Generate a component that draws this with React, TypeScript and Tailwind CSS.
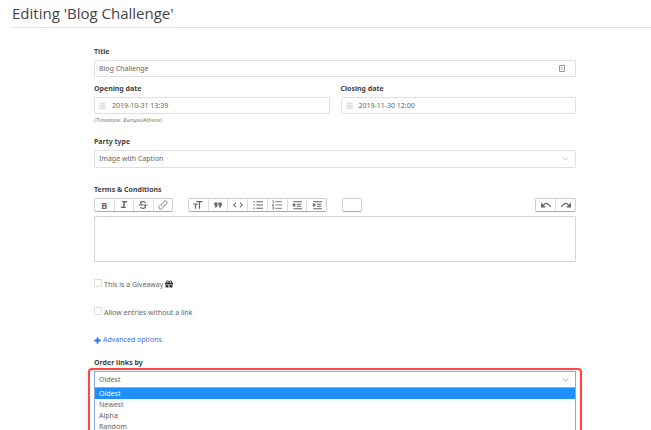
import { useState } from 'react'
import type { ReactNode } from 'react'
import { FaCalendarAlt, FaGift, FaPlus } from 'react-icons/fa'

const orderOptions = ['Oldest', 'Newest', 'Alpha', 'Random']

const icons: Record<string, ReactNode> = {
  Strike: (
    <>
      <path strokeWidth="3" d="M18 7C17 3 6 3 6 8c0 2 2 3 4 4M6 17c1 4 12 4 12-1 0-2-1-3-3-4" />
      <path strokeWidth="2" d="M1 12h22" />
    </>
  ),
  Link: (
    <>
      <path d="M10 14c-2-2-2-4 0-6l5-5c4-3 9 2 6 6l-4 4" />
      <path d="M14 10c2 2 2 4 0 6l-5 5c-4 3-9-2-6-6l4-4" />
    </>
  ),
  Heading: <path strokeWidth="3" d="M8 4h15M15.500 4v17M1 10h10M6 10v11" />,
  Quote: (
    <path
      fill="currentColor"
      stroke="none"
      d="M3 6h8v7l-3 5H4l2-5H3zM13 6h8v7l-3 5h-4l2-5h-3z"
    />
  ),
  Code: <path strokeWidth="2.500" d="M7 7l-5 5 5 5M17 7l5 5-5 5" />,
  Bullets: <path strokeWidth="2.500" d="M1 4h4M1 12h4M1 20h4M8 4h16M8 12h16M8 20h16" />,
  Numbers: <path strokeWidth="2" d="M1 2h2v5M1 10h3l-3 4h3M1 17h3v5H1M8 4h16M8 12h16M8 20h16" />,
  Outdent: <path strokeWidth="2.500" d="M3 4h21M11 10h11M11 15h11M3 21h21M7 8l-5 4 5 4M2 12h7" />,
  Indent: <path strokeWidth="2.500" d="M3 4h21M12 10h10M12 15h10M3 21h21M3 8l5 4-5 4M1 12h6" />,
  Undo: (
    <>
      <path strokeWidth="3" d="M6 12c5-6 13-5 17 5" />
      <path fill="currentColor" stroke="none" d="M0 6v12h12z" />
    </>
  ),
  Redo: (
    <>
      <path strokeWidth="3" d="M18 12c-5-6-13-5-17 5" />
      <path fill="currentColor" stroke="none" d="M24 6v12H12z" />
    </>
  ),
}

function ToolIcon({ name }: { name: string }) {
  if (name === 'Bold') return <b className="text-[9px] leading-none">B</b>
  if (name === 'Italic') {
    return <b className="font-['Liberation_Mono',monospace] text-[11px] leading-none italic">I</b>
  }
  return (
    <svg viewBox="0 0 24 24" className="size-[10px]" fill="none" stroke="currentColor" strokeWidth="2">
      {icons[name]}
    </svg>
  )
}

function ToolGroup({ names, className }: { names: string[]; className: string }) {
  return (
    <div
      className={`flex h-[14px] divide-x divide-[#ddd] rounded-[2px] border border-[#d0d0d0] border-b-[#aaa] bg-white ${className}`}
    >
      {names.map((name) => (
        <button
          key={name}
          type="button"
          aria-label={name}
          className="flex flex-1 items-center justify-center text-[#666]"
        >
          <ToolIcon name={name} />
        </button>
      ))}
    </div>
  )
}

function Chevron({ className }: { className: string }) {
  return (
    <svg
      viewBox="0 0 8 6"
      className={`pointer-events-none absolute top-1/2 right-[7px] h-[5px] w-[7px] -translate-y-1/2 ${className}`}
      fill="none"
      stroke="currentColor"
    >
      <path d="M1 1l3 3.500L7 1" />
    </svg>
  )
}

function DateField({ id, label, value }: { id: string; label: string; value: string }) {
  return (
    <div className="flex-1">
      <label htmlFor={id} className="block h-[14px] leading-3 font-bold text-[#444]">
        {label}
      </label>
      <div className="flex h-[17px] items-center gap-[6px] rounded-[1px] border border-[#e0e0e0] px-1">
        <FaCalendarAlt className="size-[7px] shrink-0 text-[#ddd]" />
        <input id={id} defaultValue={value} className="w-full min-w-0 outline-none" />
      </div>
    </div>
  )
}

export default function App() {
  const [order, setOrder] = useState('Oldest')

  return (
    <div className="h-screen overflow-hidden bg-white font-['Noto_Sans','Open_Sans',sans-serif] text-[7px] leading-[10px] text-[#666]">
      <h1 className="ml-3 h-7 border-b border-[#dde3e8] font-['Open_Sans',sans-serif] text-[15px] leading-[26px] font-medium text-[#444]">
        Editing 'Blog Challenge'
      </h1>

      <form className="pt-[18px] pr-[75px] pl-[94px]">
        <label htmlFor="title" className="block h-[14px] leading-3 font-bold text-[#444]">
          Title
        </label>
        <div className="flex h-[17px] items-center rounded-[1px] border border-[#e0e0e0] pr-[10px] pl-1">
          <input id="title" defaultValue="Blog Challenge" className="w-full min-w-0 outline-none" />
          <svg viewBox="0 0 6 7" className="h-[7px] w-[6px] shrink-0 text-[#999]" fill="none" stroke="currentColor">
            <path d="M.5.500h5v6h-5zM3 2v3" />
          </svg>
        </div>

        <div className="mt-[6px] flex gap-[11px]">
          <DateField id="opening" label="Opening date" value="2019-10-31 13:39" />
          <DateField id="closing" label="Closing date" value="2019-11-30 12:00" />
        </div>
        <p className="mt-[1px] font-['DejaVu_Sans',sans-serif] text-[5px] italic">(Timezone: Europe/Athens)</p>

        <label htmlFor="party" className="mt-[11px] block h-[14px] leading-3 font-bold text-[#444]">
          Party type
        </label>
        <div className="relative">
          <select
            id="party"
            className="block h-[18px] w-full appearance-none rounded-[1px] border border-[#e0e0e0] bg-white px-1 outline-none"
          >
            <option>Image with Caption</option>
          </select>
          <Chevron className="text-[#9cb8ea]" />
        </div>

        <label htmlFor="terms" className="mt-[17px] block h-[13px] font-bold text-[#444]">
          Terms &amp; Conditions
        </label>
        <div className="flex">
          <ToolGroup className="w-[79px]" names={['Bold', 'Italic', 'Strike', 'Link']} />
          <ToolGroup
            className="ml-[15px] w-[139px]"
            names={['Heading', 'Quote', 'Code', 'Bullets', 'Numbers', 'Outdent', 'Indent']}
          />
          <button
            type="button"
            aria-label="Attach"
            className="ml-[15px] h-[14px] w-5 rounded-[2px] border border-[#d0d0d0] border-b-[#aaa]"
          />
          <ToolGroup className="ml-auto w-[41px]" names={['Undo', 'Redo']} />
        </div>
        <textarea
          id="terms"
          className="mt-1 block h-[46px] w-full resize-none rounded-[1px] border border-[#d4d4d4] p-1 outline-none"
        />

        <label className="mt-[17px] flex h-[10px] items-start gap-[2px] leading-3">
          <input type="checkbox" className="size-2 appearance-none rounded-[1px] border border-[#ddd]" />
          This is a Giveaway
          <FaGift className="mt-[1px] size-2 text-[#333]" />
        </label>
        <label className="mt-[18px] flex h-[10px] items-start gap-[2px] leading-3">
          <input type="checkbox" className="size-2 appearance-none rounded-[1px] border border-[#ddd]" />
          Allow entries without a link
        </label>

        <a href="#advanced" className="mt-[18px] flex h-[10px] items-center gap-[2px] text-[#3273dc]">
          <FaPlus className="size-[7px]" stroke="currentColor" strokeWidth="40" />
          Advanced options
        </a>

        <label htmlFor="order" className="mt-[13px] block h-[10px] font-bold text-[#444]">
          Order links by
        </label>
        <div className="-mx-[6px] rounded-[4px] border-2 border-[#f44] px-1 pt-[1px] shadow">
          <div className="relative">
            <select
              id="order"
              value={order}
              onChange={(e) => setOrder(e.target.value)}
              className="block h-[17px] w-full appearance-none border border-[#8aa9dc] bg-white px-1 outline-none"
            >
              {orderOptions.map((o) => (
                <option key={o}>{o}</option>
              ))}
            </select>
            <Chevron className="text-[#999]" />
          </div>
          <ul role="listbox" aria-label="Order links by" className="border-x border-[#8aa9dc]">
            {orderOptions.map((o) => (
              <li
                key={o}
                role="option"
                aria-selected={o === order}
                onClick={() => setOrder(o)}
                className="h-[11px] px-1 leading-[11px] aria-selected:bg-[#1e90ff] aria-selected:text-white"
              >
                {o}
              </li>
            ))}
          </ul>
        </div>
      </form>
    </div>
  )
}
